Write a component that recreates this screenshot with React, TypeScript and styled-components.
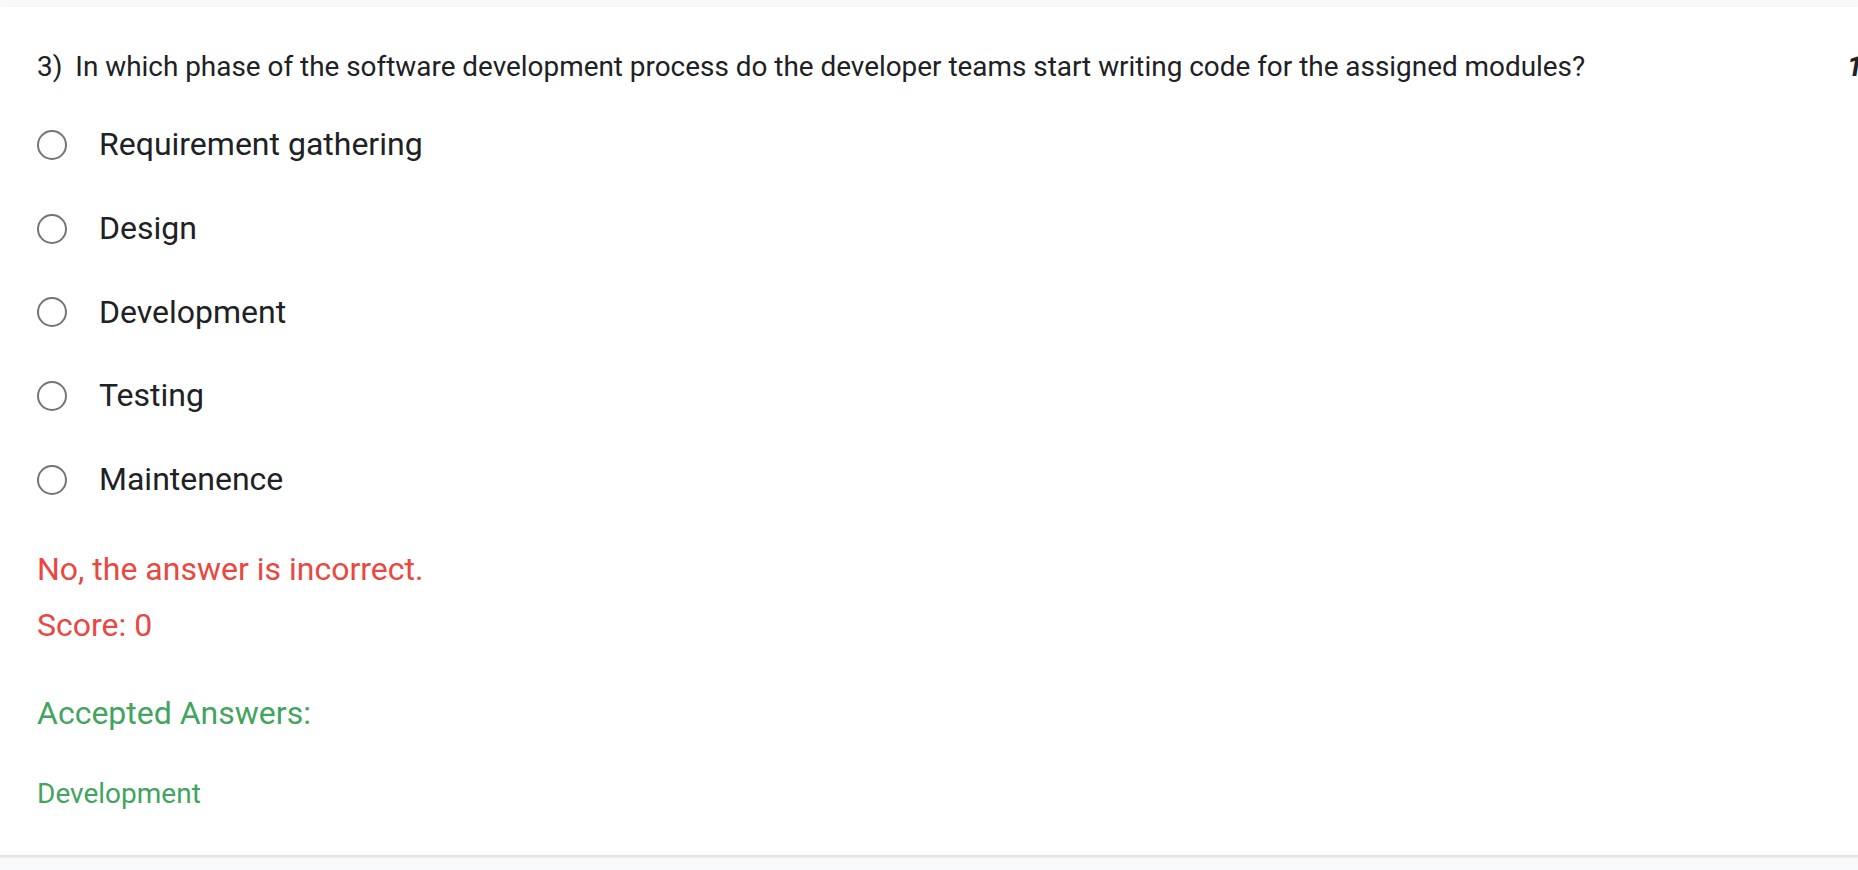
import React from "react";
import styled, { createGlobalStyle } from "styled-components";

const GlobalStyle = createGlobalStyle`
  html, body {
    margin: 0;
    padding: 0;
    background: #f8f9fb;
    overflow: hidden;
  }
  body {
    font-family: Roboto, "Liberation Sans", Arial, sans-serif;
    color: #202124;
  }
`;

const Page = styled.div`
  width: 1858px;
  height: 870px;
  padding-top: 7px;
  box-sizing: border-box;
  background: #f8f9fb;
`;

const Card = styled.section`
  background: #ffffff;
  box-shadow: 0 1px 2px rgba(0, 0, 0, 0.12);
  border-bottom: 1px solid #e4e4e6;
  padding: 43px 0 44px 37px;
  display: flex;
  flex-direction: column;
`;

const QuestionRow = styled.div`
  display: flex;
  align-items: flex-start;
  margin-bottom: 43px;
`;

const QuestionText = styled.div`
  flex: 1;
  font-size: 27.9px;
  line-height: 33px;
  color: #202124;
`;

const Number = styled.span`
  margin-right: 6px;
`;

const Points = styled.div`
  flex: none;
  width: 11px;
  white-space: nowrap;
  font-size: 28px;
  line-height: 33px;
  font-weight: 700;
  font-style: italic;
  color: #202124;
`;

const Options = styled.div`
  display: flex;
  flex-direction: column;
  gap: 46.3px;
`;

const OptionRow = styled.label`
  display: flex;
  align-items: center;
  gap: 32px;
  font-size: 32px;
  line-height: 37.5px;
  color: #202124;
`;

const Radio = styled.span`
  flex: none;
  width: 26px;
  height: 26px;
  border: 2px solid #757575;
  border-radius: 50%;
  box-sizing: content-box;
`;

const Feedback = styled.div<{ $tone: "bad" | "good"; $size: number; $mt: number }>`
  margin-top: ${(p) => p.$mt}px;
  font-size: ${(p) => p.$size}px;
  line-height: 1.172;
  color: ${(p) => (p.$tone === "bad" ? "#e9473f" : "#42a45f")};
`;

const options = [
  "Requirement gathering",
  "Design",
  "Development",
  "Testing",
  "Maintenence",
];

export default function App() {
  return (
    <>
      <GlobalStyle />
      <Page>
        <Card>
          <QuestionRow>
            <QuestionText>
              <Number>3)</Number> In which phase of the software development process do the developer teams start writing code for the assigned modules?
            </QuestionText>
            <Points>1 point</Points>
          </QuestionRow>
          <Options>
            {options.map((o) => (
              <OptionRow key={o}>
                <Radio />
                {o}
              </OptionRow>
            ))}
          </Options>
          <Feedback $tone="bad" $size={32} $mt={52.5}>
            No, the answer is incorrect.
          </Feedback>
          <Feedback $tone="bad" $size={32} $mt={18.5}>
            Score: 0
          </Feedback>
          <Feedback $tone="good" $size={32} $mt={50.5}>
            Accepted Answers:
          </Feedback>
          <Feedback $tone="good" $size={28} $mt={45}>
            Development
          </Feedback>
        </Card>
      </Page>
    </>
  );
}
